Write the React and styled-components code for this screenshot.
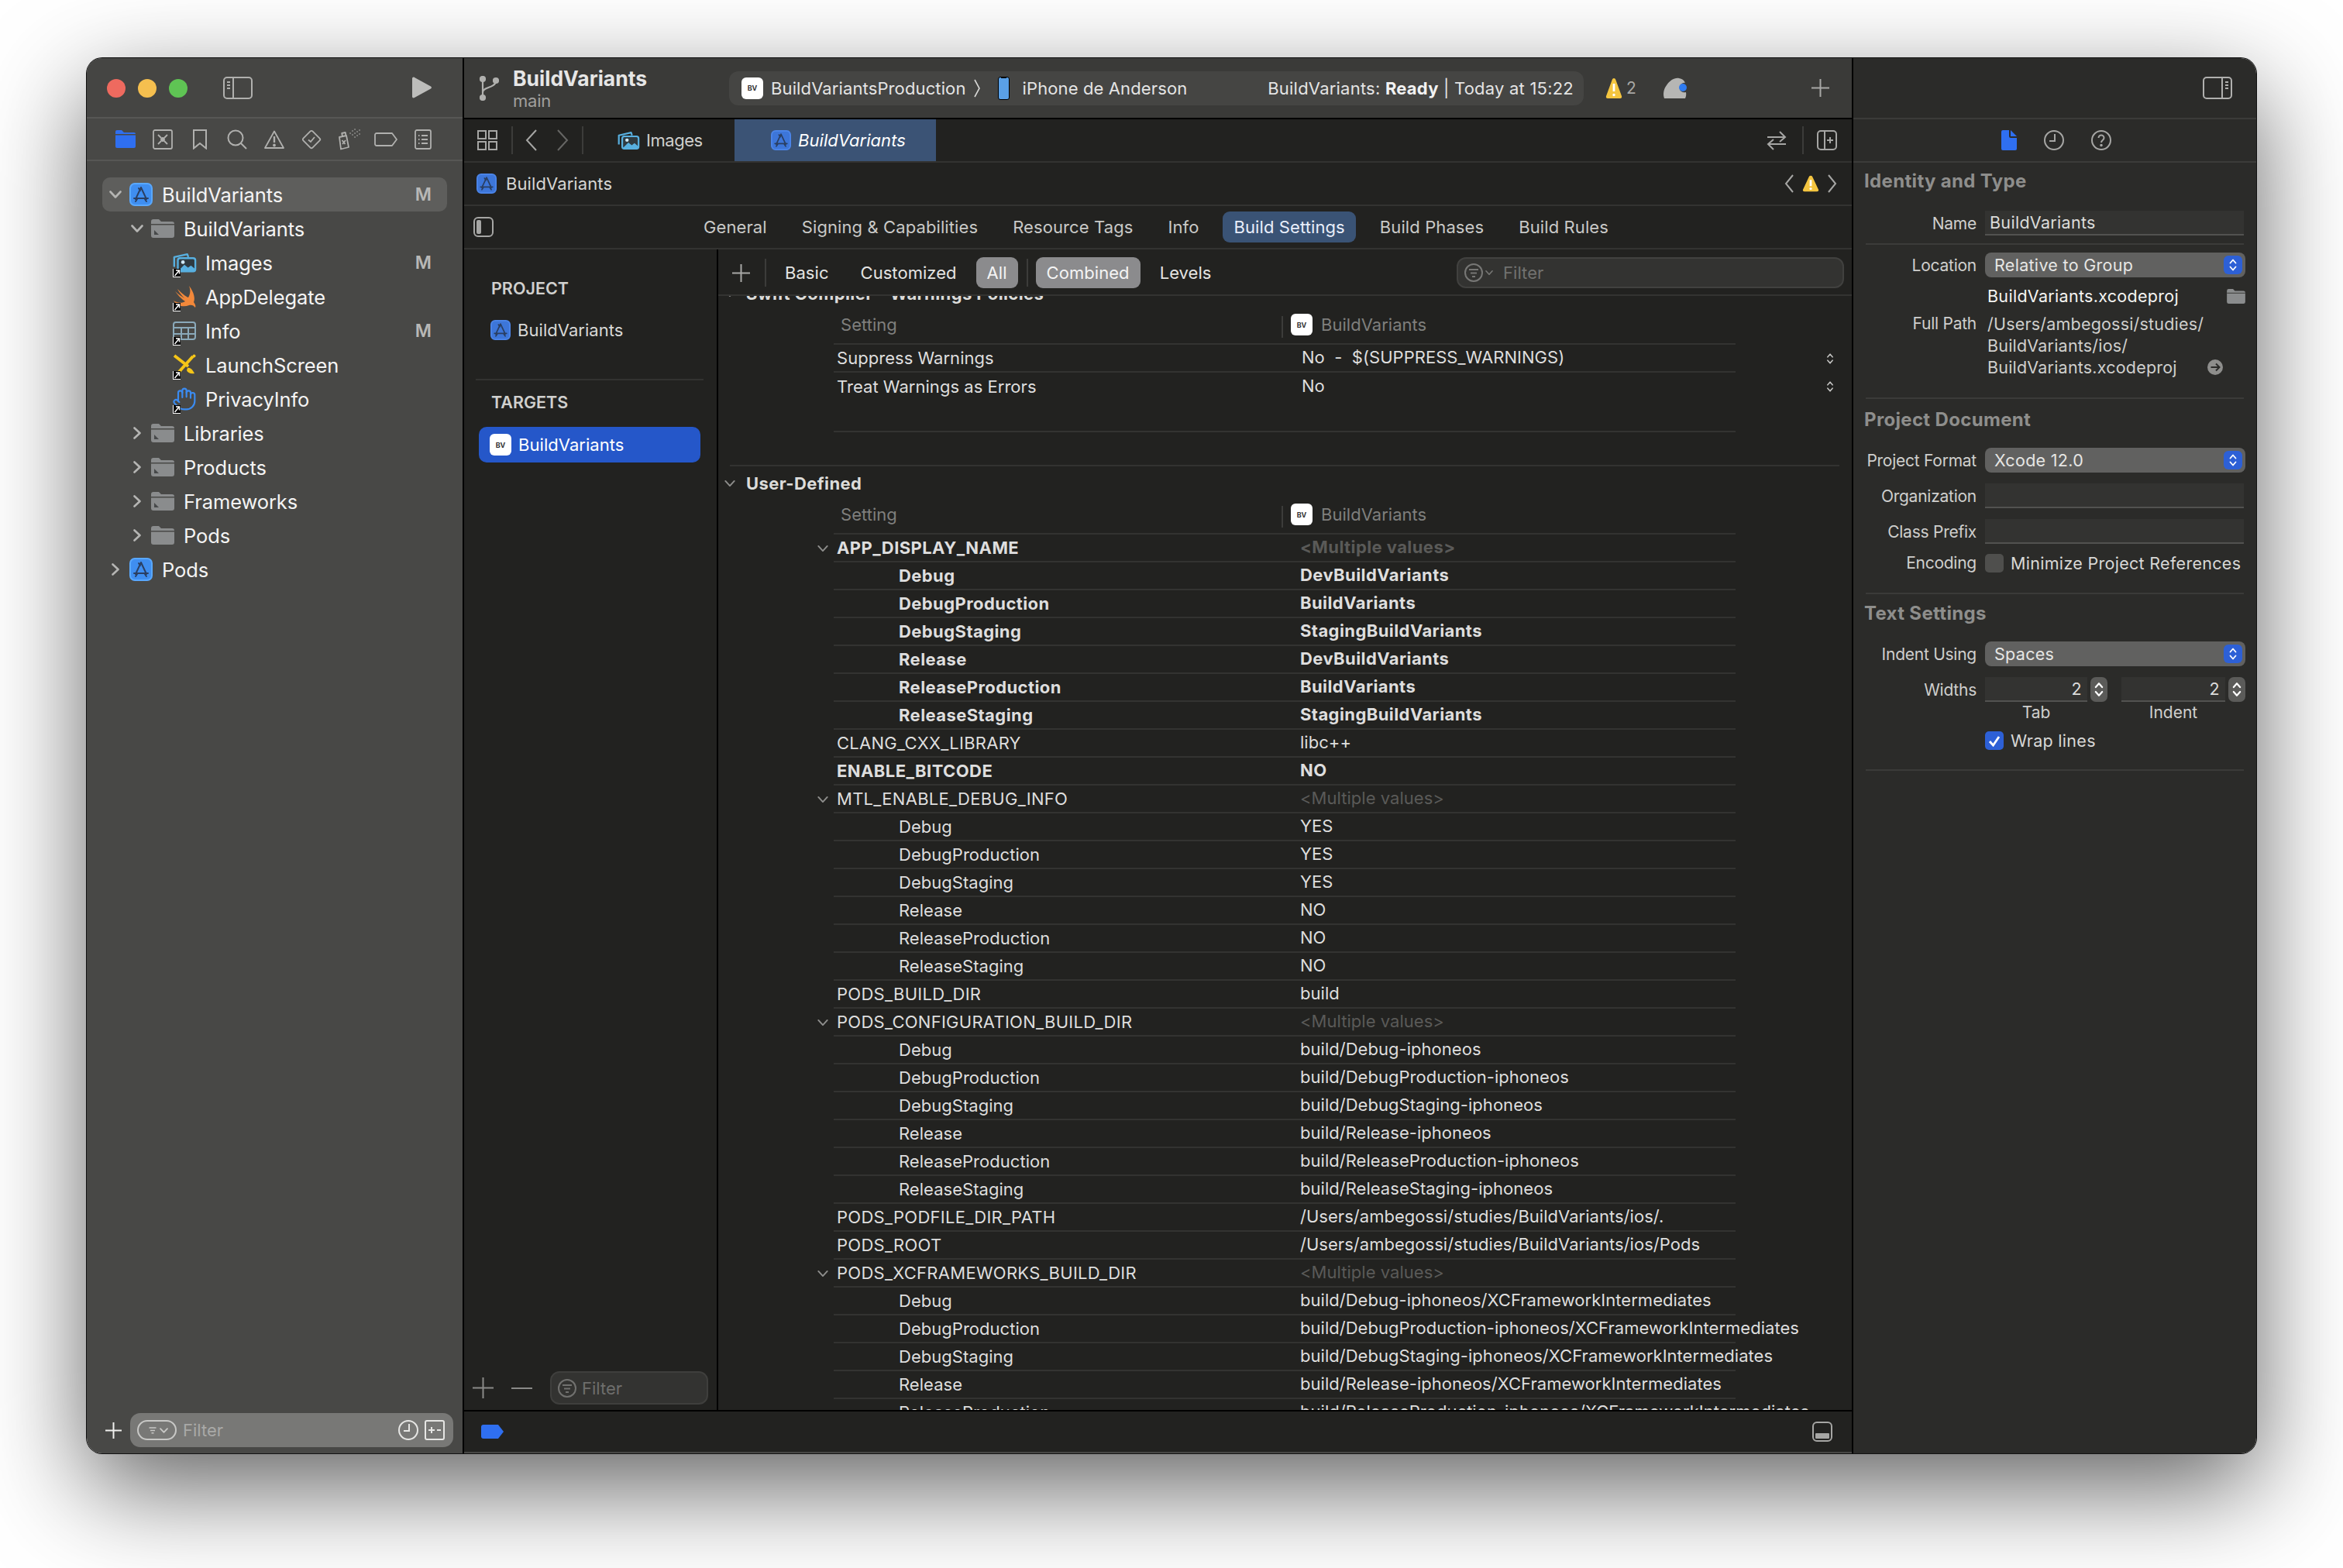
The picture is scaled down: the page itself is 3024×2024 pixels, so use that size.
import React from "react"
import styled, { createGlobalStyle } from "styled-components"
import { Hand } from "lucide-react"

const GlobalStyle = createGlobalStyle`
  html, body { margin: 0; padding: 0; background: #fff; }
  * { box-sizing: border-box; }
  body { font-family: Inter, "Noto Sans", "Liberation Sans", sans-serif; -webkit-font-smoothing: antialiased; }
`

const Page = styled.div`
  width: 3024px;
  height: 2024px;
  padding: 75px 112px 148px;
  overflow: hidden;
`
const Window = styled.div`
  width: 2800px;
  height: 1801px;
  display: flex;
  border-radius: 20px;
  overflow: hidden;
  box-shadow: 0 0 0 1px #111, 0 44px 130px rgba(0, 0, 0, 0.62);
`
const Gap = styled.span`
  width: ${p => p.$w}px;
  flex-shrink: 0;
`
const PushRight = styled.span`
  margin-left: auto;
  display: flex;
`

/* left navigator */
const Navigator = styled.div`
  width: 485px;
  display: flex;
  flex-direction: column;
  background: #484846;
  flex-shrink: 0;
`
const NavTitle = styled.div`
  height: 78px;
  display: flex;
  align-items: center;
  padding: 0 40px 0 26px;
  background: #454543;
  border-bottom: 2px solid #575755;
  flex-shrink: 0;
`
const Light = styled.span`
  width: 24px;
  height: 24px;
  border-radius: 50%;
  margin-right: 16px;
  margin-top: 2px;
  background: ${p => p.$c};
`
const NavTabs = styled.div`
  height: 55px;
  display: flex;
  align-items: center;
  padding-left: 33px;
  gap: 14px;
  border-bottom: 2px solid #575755;
  flex-shrink: 0;
`
const NavTab = styled.div`
  width: 34px;
  height: 34px;
  display: flex;
  align-items: center;
  justify-content: center;
`
const Tree = styled.div`
  flex: 1;
  padding: 21px 20px 0;
`
const TreeRow = styled.div`
  height: 44px;
  display: flex;
  align-items: center;
  border-radius: 10px;
  padding-left: ${p => 4 + p.$level * 28}px;
  padding-right: 20px;
  background: ${p => (p.$selected ? "#5e5e5c" : "transparent")};
`
const ChevronSlot = styled.span`
  width: 26px;
  margin-right: 4px;
  display: flex;
  justify-content: center;
  flex-shrink: 0;
`
const IconSlot = styled.span`
  position: relative;
  width: 32px;
  height: 32px;
  margin-right: 11px;
  display: flex;
  align-items: center;
  justify-content: center;
  flex-shrink: 0;
`
const AliasBadge = styled.span`
  position: absolute;
  left: 1px;
  bottom: -3px;
  width: 10px;
  height: 11px;
  background: #000;
  border-left: 1px solid #fff;
  border-bottom: 1px solid #fff;
  display: flex;
`
const TreeLabel = styled.span`
  font-size: 25.5px;
  letter-spacing: -0.1px;
  color: #f4f4f4;
`
const Modified = styled.span`
  margin-left: auto;
  font-size: 23px;
  font-weight: 600;
  color: #b8b8b6;
`
const NavBottom = styled.div`
  height: 54px;
  display: flex;
  align-items: center;
  padding: 0 12px 6px 24px;
  gap: 11px;
`
const NavFilter = styled.div`
  flex: 1;
  height: 44px;
  border-radius: 13px;
  background: #787876;
  display: flex;
  align-items: center;
  padding: 0 11px 0 9px;
  color: #a9a9a7;
  font-size: 22px;
  letter-spacing: 0;
`
const FilterPill = styled.span`
  width: 51px;
  height: 26px;
  border: 2px solid #c8c8c6;
  border-radius: 13px;
  margin-right: 8px;
  display: flex;
  align-items: center;
  justify-content: center;
`
const NavFilterEnd = styled.span`
  margin-left: auto;
  display: flex;
  align-items: center;
  gap: 8px;
`

/* centre editor */
const Editor = styled.div`
  flex: 1;
  min-width: 0;
  display: flex;
  flex-direction: column;
  background: #222220;
  border-left: 2px solid #000;
  border-right: 2px solid #000;
`
const Toolbar = styled.div`
  height: 79px;
  display: flex;
  align-items: center;
  padding-left: 19px;
  background: #3a3a38;
  border-bottom: 2px solid #000;
  flex-shrink: 0;
`
const ProjectTitle = styled.div`
  width: 279px;
  margin-left: 17px;
  display: flex;
  flex-direction: column;
  gap: 3px;
  padding-top: 1px;
`
const ProjectName = styled.span`
  font-size: 26.5px;
  font-weight: 700;
  letter-spacing: 0;
  color: #e6e6e6;
  line-height: 28px;
`
const BranchName = styled.span`
  font-size: 22px;
  letter-spacing: -0.2px;
  color: #a0a09e;
  line-height: 24px;
`
const SchemePill = styled.div`
  width: 1103px;
  height: 44px;
  border-radius: 12px;
  background: #454543;
  display: flex;
  align-items: center;
  padding: 0 13px 0 16px;
  color: #e4e4e4;
  font-size: 22px;
  letter-spacing: 0.12px;
  white-space: nowrap;
`
const Bv = styled.span`
  width: 28px;
  height: 28px;
  border-radius: 6px;
  background: #fff;
  color: #333;
  font-size: 9px;
  font-weight: 700;
  letter-spacing: 0;
  display: flex;
  align-items: center;
  justify-content: center;
  flex-shrink: 0;
`
const SchemeName = styled.span`
  margin-left: ${p => p.$ml}px;
`
const SchemeChevron = styled.svg`
  margin: 0 23px 0 10px;
`
const Status = styled.span`
  margin-left: auto;
  letter-spacing: 0.22px;
  b { font-weight: 700; color: #f2f2f2; }
`
const WarningCount = styled.span`
  margin-left: 5px;
  font-size: 21px;
  color: #a8a8a6;
`
const CloudIcon = styled.svg`
  margin-left: 34px;
`
const ToolbarEnd = styled.span`
  margin-left: auto;
  margin-right: 29px;
  display: flex;
`
const TabBar = styled.div`
  height: 56px;
  display: flex;
  align-items: stretch;
  padding-left: 17px;
  border-bottom: 2px solid #333331;
  flex-shrink: 0;
`
const TabTools = styled.div`
  display: flex;
  align-items: center;
`
const Sep = styled.span`
  width: 2px;
  height: ${p => p.$h || 36}px;
  background: #3c3c3a;
  margin: 0 ${p => p.$r || 0}px 0 ${p => p.$l || 0}px;
  flex-shrink: 0;
`
const FileTab = styled.div`
  height: 54px;
  display: flex;
  align-items: center;
  gap: ${p => (p.$active ? 9 : 8)}px;
  padding-left: ${p => p.$pl}px;
  width: ${p => p.$w}px;
  font-size: 22px;
  letter-spacing: ${p => (p.$active ? "0.05px" : "-0.45px")};
  color: ${p => (p.$active ? "#fff" : "#cfcfcd")};
  font-style: ${p => (p.$active ? "italic" : "normal")};
  background: ${p => (p.$active ? "#3b5375" : "transparent")};
`
const TabEnd = styled.div`
  margin-left: auto;
  padding-right: 19px;
  display: flex;
  align-items: center;
`
const JumpBar = styled.div`
  height: 56px;
  display: flex;
  align-items: center;
  padding: 0 19px 0 16px;
  gap: 12px;
  border-bottom: 2px solid #333331;
  font-size: 22px;
  letter-spacing: 0.1px;
  color: #d6d6d4;
  flex-shrink: 0;
`
const JumpEnd = styled.div`
  margin-left: auto;
  display: flex;
  align-items: center;
  gap: 11px;
`
const SectionTabs = styled.div`
  height: 56px;
  display: flex;
  align-items: center;
  padding-left: 12px;
  border-bottom: 2px solid #333331;
  flex-shrink: 0;
`
const TabList = styled.div`
  margin-left: 257px;
  display: flex;
  gap: 17px;
`
const SectionTab = styled.div`
  height: 40px;
  padding: 0 14px;
  border-radius: 9px;
  display: flex;
  align-items: center;
  font-size: 22px;
  letter-spacing: 0.1px;
  color: ${p => (p.$active ? "#e8eefa" : "#c9c9c7")};
  background: ${p => (p.$active ? "#3a5375" : "transparent")};
`
const Body = styled.div`
  flex: 1;
  min-height: 0;
  display: flex;
`
const TargetList = styled.div`
  width: 328px;
  flex-shrink: 0;
  border-right: 2px solid #000;
  display: flex;
  flex-direction: column;
  padding-top: 35px;
`
const ListHeading = styled.div`
  height: 30px;
  padding-left: 35px;
  display: flex;
  align-items: center;
  font-size: 21.5px;
  font-weight: 600;
  letter-spacing: 0;
  color: #d0d0ce;
`
const ListRow = styled.div`
  height: 46px;
  margin: ${p => p.$mt}px 21px 0 19px;
  padding-left: ${p => (p.$selected ? 14 : 15)}px;
  border-radius: 10px;
  display: flex;
  align-items: center;
  gap: 9px;
  font-size: 22px;
  letter-spacing: 0.05px;
  color: ${p => (p.$selected ? "#fff" : "#d8d8d6")};
  background: ${p => (p.$selected ? "#2557c9" : "transparent")};
`
const ListRule = styled.div`
  height: 2px;
  margin: 40px 17px 13px 15px;
  background: #333331;
`
const ListBottom = styled.div`
  margin-top: auto;
  padding: 0 11px 7px 11px;
  display: flex;
  align-items: center;
  gap: 23px;
`
const SmallFilter = styled.div`
  flex: 1;
  height: 43px;
  border-radius: 12px;
  background: #333331;
  border: 2px solid #3f3f3d;
  display: flex;
  align-items: center;
  gap: 7px;
  padding-left: 8px;
  color: #6e6e6c;
  font-size: 22px;
`
const SettingsPane = styled.div`
  flex: 1;
  min-width: 0;
  display: flex;
  flex-direction: column;
`
const FilterBar = styled.div`
  height: 60px;
  display: flex;
  align-items: center;
  padding: 2px 10px 0 18px;
  border-bottom: 2px solid #333331;
  font-size: 22px;
  letter-spacing: 0.05px;
  color: #e4e4e2;
  flex-shrink: 0;
`
const ScopeText = styled.span`
  margin-left: ${p => p.$ml}px;
`
const ScopePill = styled.span`
  height: 40px;
  margin-left: ${p => p.$ml}px;
  padding: 0 14px;
  border-radius: 9px;
  background: #8b8b8d;
  color: #f4f4f4;
  display: flex;
  align-items: center;
`
const FilterField = styled.div`
  margin-left: auto;
  width: 500px;
  height: 40px;
  border-radius: 12px;
  background: #333331;
  border: 2px solid #41413f;
  display: flex;
  align-items: center;
  gap: 3px;
  padding-left: 8px;
  color: #71716f;
`
const FilterWord = styled.span`
  margin-left: 10px;
`
const Scroller = styled.div`
  flex: 1;
  min-height: 0;
  overflow: hidden;
`
const SettingsSection = styled.div`
  margin-top: ${p => p.$mt || 0}px;
`
const SectionGap = styled.div`
  height: 42px;
`
const GroupHeader = styled.div`
  height: 44px;
  display: flex;
  align-items: center;
  padding-left: 8px;
  gap: 14px;
  font-size: 22px;
  font-weight: 700;
  letter-spacing: 0.4px;
  color: #dcdcda;
`
const GroupRule = styled.div`
  height: 2px;
  margin: 0 16px 0 15px;
  background: #333331;
`
const SetRow = styled.div`
  height: ${p => p.$h || 36}px;
  display: flex;
  align-items: stretch;
  padding-left: 127px;
  font-size: 22px;
  letter-spacing: 0.03px;
`
const RowChevron = styled.span`
  width: 22px;
  padding-right: 6px;
  display: flex;
  align-items: center;
  justify-content: center;
  flex-shrink: 0;
`
const Cells = styled.div`
  width: 1164px;
  display: flex;
  align-items: center;
  border-bottom: ${p => (p.$noRule ? "none" : "2px solid #333331")};
  flex-shrink: 0;
`
const NameCell = styled.span`
  width: 602px;
  padding-left: ${p => (p.$sub ? 84 : 4)}px;
  color: #dedede;
  font-weight: ${p => (p.$bold ? 700 : 400)};
  letter-spacing: ${p => (p.$bold ? 0.42 : p.$caps ? 0.27 : 0.03)}px;
  white-space: nowrap;
  flex-shrink: 0;
`
const ValueCell = styled.span`
  color: ${p => (p.$muted ? "#5a5a58" : "#dedede")};
  font-weight: ${p => (p.$bold ? 700 : 400)};
  letter-spacing: ${p => (p.$bold ? 0.42 : 0.03)}px;
  padding-bottom: 3px;
  padding-left: ${p => p.$pl || 0}px;
  white-space: nowrap;
`
const ColumnName = styled.span`
  width: 578px;
  padding: 0 0 6px 9px;
  color: #7f7f7d;
  flex-shrink: 0;
`
const ColumnTarget = styled.span`
  display: flex;
  align-items: center;
  gap: 11px;
  color: #7f7f7d;
  padding-bottom: 6px;
`
const Stepper = styled.span`
  margin-left: 117px;
  display: flex;
  align-items: center;
`
const StatusBar = styled.div`
  height: 56px;
  display: flex;
  align-items: center;
  padding: 0 25px 0 22px;
  border-top: 2px solid #000;
  border-bottom: 2px solid #474745;
  flex-shrink: 0;
`

/* right inspector */
const Inspector = styled.div`
  width: 520px;
  flex-shrink: 0;
  display: flex;
  flex-direction: column;
  background: #2b2b29;
  color: #cfcfcd;
  font-size: 21.5px;
  letter-spacing: 0.3px;
`
const InspectorTop = styled.div`
  height: 79px;
  display: flex;
  align-items: center;
  justify-content: flex-end;
  padding-right: 31px;
  border-bottom: 2px solid #3b3b39;
  flex-shrink: 0;
`
const InspectorTabs = styled.div`
  height: 56px;
  display: flex;
  align-items: center;
  padding-left: 191px;
  gap: 35px;
  border-bottom: 2px solid #3b3b39;
  flex-shrink: 0;
`
const InspectorTitle = styled.div`
  height: ${p => p.$h}px;
  padding-left: 14px;
  display: flex;
  align-items: center;
  font-size: 24px;
  font-weight: 700;
  letter-spacing: 0.33px;
  color: #8e8e8c;
`
const FormRow = styled.div`
  min-height: 24px;
  height: ${p => (p.$h ? `${p.$h}px` : "auto")};
  margin-top: ${p => p.$mt || 0}px;
  display: flex;
  align-items: ${p => (p.$top ? "flex-start" : "center")};
  padding-right: 14px;
`
const FormLabel = styled.span`
  width: 159px;
  margin-right: 11px;
  font-size: 21px;
  letter-spacing: -0.25px;
  line-height: ${p => (p.$tall ? "28px" : "normal")};
  text-align: right;
  white-space: nowrap;
  flex-shrink: 0;
`
const TextField = styled.div`
  flex: 1;
  height: 32px;
  margin-right: 2px;
  padding-left: 6px;
  background: #333331;
  border-bottom: 2px solid #525250;
  display: flex;
  align-items: center;
  color: #dcdcda;
`
const Popup = styled.div`
  flex: 1;
  height: 32px;
  border-radius: 8px;
  background: #616160;
  color: #e6e6e4;
  padding: 0 4px 0 12px;
  display: flex;
  align-items: center;
  justify-content: space-between;
`
const PopupArrows = styled.span`
  width: 24px;
  height: 24px;
  border-radius: 6px;
  background: #2d60d6;
  display: flex;
  align-items: center;
  justify-content: center;
`
const Value = styled.span`
  color: ${p => (p.$bright ? "#f4f4f2" : "#cfcfcd")};
  padding-left: 3px;
  line-height: 28px;
  white-space: nowrap;
`
const CheckText = styled.span`
  color: #d8d8d6;
  line-height: 24px;
  white-space: nowrap;
`
const PathBlock = styled.div`
  flex: 1;
  display: flex;
  flex-direction: column;
  letter-spacing: 0.2px;
`
const PathLine = styled.div`
  display: flex;
  align-items: center;
  justify-content: space-between;
  padding-right: 29px;
  height: 28px;
`
const FolderEnd = styled.div`
  flex: 1;
  display: flex;
  align-items: center;
  justify-content: space-between;
`
const InspectorRule = styled.div`
  height: 2px;
  margin: ${p => p.$mt}px 16px 0;
  background: #3b3b39;
`
const Check = styled.span`
  width: 24px;
  height: 24px;
  margin-right: 9px;
  border-radius: 5px;
  background: ${p => (p.$on ? "#2d60d6" : "#4f4f4d")};
  display: flex;
  align-items: center;
  justify-content: center;
  flex-shrink: 0;
`
const NumberField = styled.div`
  width: ${p => p.$w}px;
  height: 32px;
  padding-right: 7px;
  background: #333331;
  border-bottom: 2px solid #525250;
  display: flex;
  align-items: center;
  justify-content: flex-end;
  color: #dcdcda;
`
const StepBox = styled.span`
  width: 22px;
  height: 32px;
  margin-left: 4px;
  margin-right: ${p => p.$mr || 0}px;
  border-radius: 7px;
  background: #5b5b59;
  display: flex;
  align-items: center;
  justify-content: center;
`
const Caption = styled.span`
  width: ${p => p.$w}px;
  margin-right: ${p => p.$mr}px;
  text-align: center;
  font-size: 21px;
  letter-spacing: 0;
`

/* drawings */
const AppIcon = ({ size = 30, fill = "#3f8ef0", edge = "#59a8ff" }) => (
  <svg width={size} height={size} viewBox="0 0 30 30">
    <rect x="1" y="1" width="28" height="28" rx="6" fill={fill} stroke={edge} strokeWidth="2" />
    <path d="M15 6 L22 21 M15 6 L8 21 M12 7l2 3 M6 20H24 M10 21l-2 3 M20 21l2 3" fill="none" stroke="#2a3f63" strokeWidth="2" strokeLinecap="round" />
  </svg>
)
const Folder = ({ mark = true, width = 30, height = 24 }) => (
  <svg width={width} height={height} viewBox="0 0 30 24">
    <path d="M0 3a3 3 0 0 1 3-3h7l3 3h14a3 3 0 0 1 3 3v15a3 3 0 0 1-3 3H3a3 3 0 0 1-3-3z" fill="#8a8c8d" />
    <rect x="0" y="6" width="30" height="1.5" fill="#484846" />
    {mark && <path d="M4 14l6 6H4z" fill="#47494a" />}
  </svg>
)
const ImagesIcon = ({ size = 34 }) => (
  <svg width={size} height={size * 0.82} viewBox="0 0 34 28">
    <path d="M3 20V6.5L21 2.5l1.4 4" fill="none" stroke="#58b0e0" strokeWidth="2.5" strokeLinejoin="round" />
    <rect x="8" y="8" width="24" height="18" rx="3" fill="#2f3a40" stroke="#58b0e0" strokeWidth="2.5" />
    <path d="M9 25l8-8 5 4 4-3 6 5v1a2 2 0 0 1-2 2H11z" fill="#58b0e0" />
    <circle cx="15" cy="13.5" r="2.5" fill="#cfe9f7" />
  </svg>
)
const SwiftIcon = () => (
  <svg width="30" height="30" viewBox="0 0 30 30">
    <path d="M21 1C28 10 29 18 27 22C29 25 30 27 29 29C27 26 24 25 21 26C14 29 6 27 1 20C6 23 12 24 16 21C11 18 6 12 3 8C7 12 12 15 15 17C12 14 8 9 6 5C11 10 17 15 20 16C23 11 23 6 21 1Z" fill="#f2883a" />
  </svg>
)
const PlistIcon = () => (
  <svg width="30" height="24" viewBox="0 0 30 24">
    <rect x="1" y="1" width="28" height="22" rx="3" fill="none" stroke="#8aa9ba" strokeWidth="2" />
    <path d="M1 8H29M1 16H29M11 8V23M20 8V23" stroke="#8aa9ba" strokeWidth="2" />
  </svg>
)
const StoryboardIcon = () => (
  <svg width="30" height="28" viewBox="0 0 30 28">
    <path d="M2 2L20 16" stroke="#f5c518" strokeWidth="4" />
    <path d="M26 3L8 23" stroke="#f5c518" strokeWidth="4" />
    <path d="M19 18c3-1 6 1 9 7-5 1-9-1-10-4z" fill="#f5c518" />
    <circle cx="27.5" cy="2.5" r="2" fill="#f5c518" />
  </svg>
)
const Alias = () => (
  <AliasBadge>
    <svg width="9" height="10" viewBox="0 0 9 10">
      <path d="M1.5 9L7 2.5M3 2H7.5V6.5" fill="none" stroke="#fff" strokeWidth="1.5" />
    </svg>
  </AliasBadge>
)
const Chevron = ({ dir = "down", size = 16, color = "#b5b5b3", width = 2.6 }) => (
  <svg width={size} height={size} viewBox="0 0 16 16">
    <path
      d={dir === "down" ? "M1.5 4.5L8 11.5L14.5 4.5" : "M4.5 1.5L11.5 8L4.5 14.5"}
      fill="none"
      stroke={color}
      strokeWidth={width}
      strokeLinecap="round"
      strokeLinejoin="round"
    />
  </svg>
)
const NavChevron = ({ dir }) => (
  <svg width="16" height="28" viewBox="0 0 16 28">
    <path d={dir === "left" ? "M14 1L2 14L14 27" : "M2 1L14 14L2 27"} fill="none" stroke={dir === "left" ? "#a6a6a4" : "#666664"} strokeWidth="2" />
  </svg>
)
const SmallNav = ({ dir }) => (
  <svg width="12" height="24" viewBox="0 0 12 24">
    <path d={dir === "left" ? "M11 1L2 12L11 23" : "M1 1L10 12L1 23"} fill="none" stroke="#a6a6a4" strokeWidth="2" />
  </svg>
)
const PanelIcon = ({ side = "left" }) => (
  <svg width="38" height="29" viewBox="0 0 38 29">
    <rect x="1" y="1" width="36" height="27" rx="4" fill="none" stroke="#b0b0ae" strokeWidth="2" />
    {side === "left" ? (
      <path d="M13 1V28M5 7H9M5 11H9M5 15H9" stroke="#b0b0ae" strokeWidth="2" />
    ) : (
      <path d="M25 1V28M29 7H33M29 11H33M29 15H33" stroke="#b0b0ae" strokeWidth="2" />
    )}
  </svg>
)
const Warn = ({ w = 22, h = 28 }) => (
  <svg width={w} height={h} viewBox="0 0 22 28" preserveAspectRatio="none">
    <path d="M11 1C12.5 1 13 2 13.5 3.5L21 24c.6 2-.4 3-2 3H3c-1.6 0-2.6-1-2-3L8.5 3.5C9 2 9.5 1 11 1Z" fill="#f4c540" />
    <path d="M11 8V18" stroke="#fff" strokeWidth="2.8" />
    <circle cx="11" cy="22.5" r="1.7" fill="#fff" />
  </svg>
)
const Plus = ({ size = 23, color = "#a8a8a6", width = 2 }) => (
  <svg width={size} height={size} viewBox="0 0 24 24">
    <path d="M12 0V24M0 12H24" stroke={color} strokeWidth={width * 24 / size} />
  </svg>
)
const FilterLines = ({ size = 24, color = "#777775", ring = true }) => (
  <svg width={size} height={size} viewBox="0 0 24 24">
    {ring && <circle cx="12" cy="12" r="11" fill="none" stroke={color} strokeWidth="2" />}
    <path d="M6 8H18M8 12.5H16M10 17H14" stroke={color} strokeWidth="2" />
  </svg>
)
const UpDown = ({ color = "#fff", height = 18, width = 10 }) => (
  <svg width={width} height={height} viewBox="0 0 10 18">
    <path d="M1.5 6.5L5 2.5L8.5 6.5M1.5 11.5L5 15.5L8.5 11.5" fill="none" stroke={color} strokeWidth="1.8" strokeLinecap="round" strokeLinejoin="round" />
  </svg>
)
const Clock = ({ size = 26, color = "#a6a6a4" }) => (
  <svg width={size} height={size} viewBox="0 0 26 26">
    <circle cx="13" cy="13" r="12" fill="none" stroke={color} strokeWidth="2" />
    <path d="M14 5V14H7" fill="none" stroke={color} strokeWidth="2" />
  </svg>
)
const NavIcons = () => (
  <>
    <NavTab>
      <svg width="26" height="23" viewBox="0 0 26 23">
        <path d="M0 2a2 2 0 0 1 2-2h6l3 3h13a2 2 0 0 1 2 2v16a2 2 0 0 1-2 2H2a2 2 0 0 1-2-2z" fill="#2f6ff0" />
        <rect y="5" width="26" height="1.5" fill="#484846" />
      </svg>
    </NavTab>
    <NavTab>
      <svg width="26" height="26" viewBox="0 0 26 26" fill="none" stroke="#b0b0ae" strokeWidth="1.8">
        <rect x="1" y="1" width="24" height="24" rx="2" />
        <path d="M7 7l4 4M19 7l-4 4M7 19l4-4M19 19l-4-4" />
        <circle cx="13" cy="13" r="2" fill="#b0b0ae" />
      </svg>
    </NavTab>
    <NavTab>
      <svg width="18" height="26" viewBox="0 0 18 26" fill="none" stroke="#b0b0ae" strokeWidth="2">
        <path d="M1 1H17V24.5L9 18L1 24.5Z" />
      </svg>
    </NavTab>
    <NavTab>
      <svg width="26" height="26" viewBox="0 0 26 26" fill="none" stroke="#b0b0ae" strokeWidth="2">
        <circle cx="11" cy="11" r="9.5" />
        <path d="M18 18L25 25" />
      </svg>
    </NavTab>
    <NavTab>
      <svg width="26" height="24" viewBox="0 0 26 24" fill="none" stroke="#b0b0ae" strokeWidth="1.8">
        <path d="M13 1.5L25 23H1Z" strokeLinejoin="round" />
        <path d="M13 8V16" strokeWidth="2.4" />
        <circle cx="13" cy="19.5" r="1" fill="#b0b0ae" />
      </svg>
    </NavTab>
    <NavTab>
      <svg width="26" height="26" viewBox="0 0 26 26" fill="none" stroke="#b0b0ae" strokeWidth="1.8">
        <rect x="4.5" y="4.5" width="17" height="17" rx="2" transform="rotate(45 13 13)" />
        <path d="M9 13.5L12 16L17 10" />
      </svg>
    </NavTab>
    <NavTab>
      <svg width="30" height="28" viewBox="0 0 30 28" fill="none" stroke="#b0b0ae" strokeWidth="1.8">
        <path d="M3 11l9-2 3 15-10 2.5Z M7 10l-.8-4 4.500-1 .8 4" strokeLinejoin="round" />
        <path d="M6.5 15l4 5M11 15l-4 5" />
        <path d="M17 6h.1M20 3h.1M23 1h.1M20 8h.1M23 6h.1M26 4h.1M23 11h.1M26 9h.1M29 7h.1M29 2h.1" strokeWidth="1.6" strokeLinecap="round" />
      </svg>
    </NavTab>
    <NavTab>
      <svg width="30" height="18" viewBox="0 0 30 18" fill="none" stroke="#b0b0ae" strokeWidth="1.8">
        <path d="M3 1H23L29 9L23 17H3a2 2 0 0 1-2-2V3a2 2 0 0 1 2-2Z" strokeLinejoin="round" />
      </svg>
    </NavTab>
    <NavTab>
      <svg width="22" height="26" viewBox="0 0 22 26" fill="none" stroke="#b0b0ae" strokeWidth="1.8">
        <rect x="1" y="1" width="20" height="24" rx="2" />
        <path d="M5 8h1.5M9 8h8M5 13h1.5M9 13h8M5 18h1.5M9 18h8" />
      </svg>
    </NavTab>
  </>
)

const tree = [
  { name: "BuildVariants", level: 0, open: true, icon: "app", selected: true, m: true },
  { name: "BuildVariants", level: 1, open: true, icon: "folder" },
  { name: "Images", level: 2, icon: "images", alias: true, m: true },
  { name: "AppDelegate", level: 2, icon: "swift", alias: true },
  { name: "Info", level: 2, icon: "plist", alias: true, m: true },
  { name: "LaunchScreen", level: 2, icon: "story", alias: true },
  { name: "PrivacyInfo", level: 2, icon: "hand", alias: true },
  { name: "Libraries", level: 1, closed: true, icon: "folder" },
  { name: "Products", level: 1, closed: true, icon: "folder" },
  { name: "Frameworks", level: 1, closed: true, icon: "folder" },
  { name: "Pods", level: 1, closed: true, icon: "plain" },
  { name: "Pods", level: 0, closed: true, icon: "app" },
]

const treeIcon = kind => {
  if (kind === "app") return <AppIcon />
  if (kind === "folder") return <Folder />
  if (kind === "plain") return <Folder mark={false} />
  if (kind === "images") return <ImagesIcon />
  if (kind === "swift") return <SwiftIcon />
  if (kind === "plist") return <PlistIcon />
  if (kind === "story") return <StoryboardIcon />
  return <Hand size={32} color="#3b8bf0" strokeWidth={1.6} />
}

const variants = ["Debug", "DebugProduction", "DebugStaging", "Release", "ReleaseProduction", "ReleaseStaging"]

const group = (name, values, bold) => [
  { name, value: "<Multiple values>", muted: true, open: true, bold },
  ...variants.map((v, i) => ({ name: v, value: values[i], sub: true, bold })),
]

const buildDirs = s => variants.map(v => `build/${v}-iphoneos${s}`)

const rows = [
  ...group("APP_DISPLAY_NAME", ["DevBuildVariants", "BuildVariants", "StagingBuildVariants", "DevBuildVariants", "BuildVariants", "StagingBuildVariants"], true),
  { name: "CLANG_CXX_LIBRARY", value: "libc++" },
  { name: "ENABLE_BITCODE", value: "NO", bold: true },
  ...group("MTL_ENABLE_DEBUG_INFO", ["YES", "YES", "YES", "NO", "NO", "NO"]),
  { name: "PODS_BUILD_DIR", value: "build" },
  ...group("PODS_CONFIGURATION_BUILD_DIR", buildDirs("")),
  { name: "PODS_PODFILE_DIR_PATH", value: "/Users/ambegossi/studies/BuildVariants/ios/." },
  { name: "PODS_ROOT", value: "/Users/ambegossi/studies/BuildVariants/ios/Pods" },
  ...group("PODS_XCFRAMEWORKS_BUILD_DIR", buildDirs("/XCFrameworkIntermediates")).slice(0, 6),
]

const SettingRow = ({ row }) => (
  <SetRow>
    <RowChevron>{row.open && <Chevron size={14} color="#8e8e8c" width={2.2} />}</RowChevron>
    <Cells>
      <NameCell $sub={row.sub} $bold={row.bold} $caps={row.name === row.name.toUpperCase()}>{row.name}</NameCell>
      <ValueCell $muted={row.muted} $bold={row.bold}>{row.value}</ValueCell>
    </Cells>
  </SetRow>
)

const ColumnHeader = () => (
  <SetRow $h={44}>
    <RowChevron />
    <Cells>
      <ColumnName>Setting</ColumnName>
      <Sep $h={28} $r={10} />
      <ColumnTarget><Bv>BV</Bv>BuildVariants</ColumnTarget>
    </Cells>
  </SetRow>
)

const PopupButton = ({ children }) => (
  <Popup>
    {children}
    <PopupArrows><UpDown /></PopupArrows>
  </Popup>
)

export default function App() {
  return (
    <Page>
      <GlobalStyle />
      <Window>
        <Navigator>
          <NavTitle>
            <Light $c="#ee6a5f" />
            <Light $c="#f5bf4f" />
            <Light $c="#5fc454" />
            <Gap $w={30} />
            <PanelIcon />
            <PushRight>
              <svg width="26" height="28" viewBox="0 0 26 28">
                <path d="M1 2.5C1 .8 2.5 0 4 .9L25 12.5c1.3.8 1.3 2.2 0 3L4 27.1C2.5 28 1 27.2 1 25.5Z" fill="#bdbdbb" />
              </svg>
            </PushRight>
          </NavTitle>
          <NavTabs><NavIcons /></NavTabs>
          <Tree>
            {tree.map((item, i) => (
              <TreeRow key={i} $level={item.level} $selected={item.selected}>
                <ChevronSlot>
                  {item.open && <Chevron />}
                  {item.closed && <Chevron dir="right" />}
                </ChevronSlot>
                <IconSlot>
                  {treeIcon(item.icon)}
                  {item.alias && <Alias />}
                </IconSlot>
                <TreeLabel>{item.name}</TreeLabel>
                {item.m && <Modified>M</Modified>}
              </TreeRow>
            ))}
          </Tree>
          <NavBottom>
            <Plus size={21} color="#f0f0ee" />
            <NavFilter>
              <FilterPill>
                <FilterLines size={18} color="#c8c8c6" ring={false} />
                <Chevron size={11} color="#c8c8c6" width={2.6} />
              </FilterPill>
              Filter
              <NavFilterEnd>
                <Clock color="#e6e6e4" />
                <svg width="26" height="26" viewBox="0 0 26 26" fill="none" stroke="#e6e6e4" strokeWidth="2">
                  <rect x="1" y="1" width="24" height="24" rx="2" />
                  <path d="M5 13h8M9 9v8M16 13h5" />
                </svg>
              </NavFilterEnd>
            </NavFilter>
          </NavBottom>
        </Navigator>

        <Editor>
          <Toolbar>
            <svg width="27" height="32" viewBox="0 0 27 32" fill="none" stroke="#b0b0ae" strokeWidth="2.2">
              <path d="M5 5V27M5 21C5 14 22 16 22 6" />
              <circle cx="5" cy="4" r="3" fill="#b0b0ae" />
              <circle cx="22" cy="6" r="3" fill="#b0b0ae" />
              <circle cx="5" cy="28" r="3" fill="#b0b0ae" />
            </svg>
            <ProjectTitle>
              <ProjectName>BuildVariants</ProjectName>
              <BranchName>main</BranchName>
            </ProjectTitle>
            <SchemePill>
              <Bv>BV</Bv>
              <SchemeName $ml={10}>BuildVariantsProduction</SchemeName>
              <SchemeChevron width="8" height="24" viewBox="0 0 8 24">
                <path d="M1 1L7 12L1 23" fill="none" stroke="#d8d8d6" strokeWidth="1.6" />
              </SchemeChevron>
              <svg width="15" height="30" viewBox="0 0 15 30">
                <rect x=".5" y=".5" width="14" height="29" rx="2.5" fill="#5aa0e6" stroke="#000" />
                <rect x="4" y="0" width="7" height="2" fill="#000" />
              </svg>
              <SchemeName $ml={17}>iPhone de Anderson</SchemeName>
              <Status>BuildVariants: <b>Ready</b> | Today at 15:22</Status>
            </SchemePill>
            <Gap $w={28} />
            <Warn />
            <WarningCount>2</WarningCount>
            <CloudIcon width="32" height="28" viewBox="0 0 32 28">
              <path d="M2 27c-2-5-1-12 3-17C9 4 15 0 21 1c4 .6 7 3 8 6-4-1-8 3-7 8 .6 3 4 5 8 4 .6 3 0 6-1 8z" fill="#b6b6b4" />
              <circle cx="26" cy="13" r="5" fill="#2f7bf0" />
            </CloudIcon>
            <ToolbarEnd><Plus /></ToolbarEnd>
          </Toolbar>

          <TabBar>
            <TabTools>
              <svg width="26" height="26" viewBox="0 0 26 26" fill="none" stroke="#a6a6a4" strokeWidth="2">
                <rect x="1" y="1" width="10" height="10" />
                <rect x="15" y="1" width="10" height="10" />
                <rect x="1" y="15" width="10" height="10" />
                <rect x="15" y="15" width="10" height="10" />
              </svg>
              <Sep $l={18} $r={16} />
              <NavChevron dir="left" />
              <Gap $w={24} />
              <NavChevron dir="right" />
              <Sep $l={17} />
            </TabTools>
            <FileTab $w={195} $pl={43}><ImagesIcon size={30} />Images</FileTab>
            <FileTab $active $w={260} $pl={47}><AppIcon size={26} fill="#3d76d9" edge="#4c86ea" />BuildVariants</FileTab>
            <TabEnd>
              <svg width="26" height="26" viewBox="0 0 26 26" fill="none" stroke="#a6a6a4" strokeWidth="2">
                <path d="M1 9H24M17 2L24 9L17 15M25 18H2M9 12L2 18L9 25" />
              </svg>
              <Sep $l={20} $r={17} />
              <svg width="26" height="26" viewBox="0 0 26 26" fill="none" stroke="#a6a6a4" strokeWidth="2">
                <rect x="1" y="1" width="24" height="24" rx="4" />
                <path d="M10 1V25M17 9V17M13 13H21" />
              </svg>
            </TabEnd>
          </TabBar>

          <JumpBar>
            <AppIcon size={26} fill="#3d76d9" edge="#4c86ea" />
            BuildVariants
            <JumpEnd>
              <SmallNav dir="left" />
              <Warn w={22} h={22} />
              <SmallNav dir="right" />
            </JumpEnd>
          </JumpBar>

          <SectionTabs>
            <svg width="26" height="26" viewBox="0 0 26 26" fill="none">
              <rect x="1" y="1" width="24" height="24" rx="5" stroke="#a6a6a4" strokeWidth="2" />
              <rect x="4" y="4" width="6" height="18" rx="2" fill="#a6a6a4" />
            </svg>
            <TabList>
              <SectionTab>General</SectionTab>
              <SectionTab>Signing & Capabilities</SectionTab>
              <SectionTab>Resource Tags</SectionTab>
              <SectionTab>Info</SectionTab>
              <SectionTab $active>Build Settings</SectionTab>
              <SectionTab>Build Phases</SectionTab>
              <SectionTab>Build Rules</SectionTab>
            </TabList>
          </SectionTabs>

          <Body>
            <TargetList>
              <ListHeading>PROJECT</ListHeading>
              <ListRow $mt={16}><AppIcon size={26} fill="#3d76d9" edge="#4c86ea" />BuildVariants</ListRow>
              <ListRule />
              <ListHeading>TARGETS</ListHeading>
              <ListRow $mt={17} $selected><Bv>BV</Bv>BuildVariants</ListRow>
              <ListBottom>
                <Plus size={27} color="#8a8a88" />
                <svg width="27" height="4" viewBox="0 0 27 4"><rect y="1" width="27" height="2" fill="#8a8a88" /></svg>
                <SmallFilter><FilterLines size={24} color="#71716f" />Filter</SmallFilter>
              </ListBottom>
            </TargetList>

            <SettingsPane>
              <FilterBar>
                <Plus />
                <Sep $h={36} $l={19} />
                <ScopeText $ml={24}>Basic</ScopeText>
                <ScopeText $ml={41}>Customized</ScopeText>
                <ScopePill $ml={25}>All</ScopePill>
                <Sep $h={36} $l={11} />
                <ScopePill $ml={10}>Combined</ScopePill>
                <ScopeText $ml={25}>Levels</ScopeText>
                <FilterField>
                  <FilterLines color="#777775" />
                  <Chevron size={10} color="#777775" />
                  <FilterWord>Filter</FilterWord>
                </FilterField>
              </FilterBar>
              <Scroller>
                <SettingsSection $mt={-25}>
                  <GroupHeader>
                    <Chevron size={14} color="#8e8e8c" width={2.2} />
                    Swift Compiler - Warnings Policies
                  </GroupHeader>
                  <ColumnHeader />
                  <SetRow>
                    <RowChevron />
                    <Cells>
                      <NameCell>Suppress Warnings</NameCell>
                      <ValueCell $pl={2}>No&nbsp; -&nbsp; $(SUPPRESS_WARNINGS)</ValueCell>
                    </Cells>
                    <Stepper><UpDown color="#c4c4c2" height={16} /></Stepper>
                  </SetRow>
                  <SetRow>
                    <RowChevron />
                    <Cells $noRule>
                      <NameCell>Treat Warnings as Errors</NameCell>
                      <ValueCell $pl={2}>No</ValueCell>
                    </Cells>
                    <Stepper><UpDown color="#c4c4c2" height={16} /></Stepper>
                  </SetRow>
                  <SetRow $h={41}>
                    <RowChevron />
                    <Cells />
                  </SetRow>
                </SettingsSection>
                <SettingsSection>
                  <SectionGap />
                  <GroupRule />
                  <GroupHeader>
                    <Chevron size={14} color="#8e8e8c" width={2.2} />
                    User-Defined
                  </GroupHeader>
                  <ColumnHeader />
                  {rows.map((row, i) => <SettingRow key={i} row={row} />)}
                </SettingsSection>
              </Scroller>
            </SettingsPane>
          </Body>

          <StatusBar>
            <svg width="29" height="18" viewBox="0 0 29 18">
              <path d="M3 0H22L29 9L22 18H3a3 3 0 0 1-3-3V3a3 3 0 0 1 3-3Z" fill="#2f6ff0" />
            </svg>
            <PushRight>
              <svg width="26" height="26" viewBox="0 0 26 26" fill="none">
                <rect x="1" y="1" width="24" height="24" rx="5" stroke="#a6a6a4" strokeWidth="2" />
                <rect x="4" y="15" width="18" height="7" rx="1" fill="#a6a6a4" />
              </svg>
            </PushRight>
          </StatusBar>
        </Editor>

        <Inspector>
          <InspectorTop><PanelIcon side="right" /></InspectorTop>
          <InspectorTabs>
            <svg width="20" height="26" viewBox="0 0 20 26">
              <path d="M2 0H10V8a2 2 0 0 0 2 2h8V24a2 2 0 0 1-2 2H2a2 2 0 0 1-2-2V2a2 2 0 0 1 2-2ZM12 0L20 8H12Z" fill="#2f6ff0" />
            </svg>
            <Clock color="#a6a6a4" />
            <svg width="26" height="26" viewBox="0 0 26 26" fill="none" stroke="#a6a6a4" strokeWidth="2">
              <circle cx="13" cy="13" r="12" />
              <path d="M9.5 10c0-2 1.6-3.5 3.5-3.5S16.5 8 16.5 10c0 3-3.5 3-3.5 6" />
              <circle cx="13" cy="19.5" r=".8" fill="#a6a6a4" />
            </svg>
          </InspectorTabs>

          <InspectorTitle $h={46}>Identity and Type</InspectorTitle>
          <FormRow $mt={16}>
            <FormLabel>Name</FormLabel>
            <TextField>BuildVariants</TextField>
          </FormRow>
          <InspectorRule $mt={10} />
          <FormRow $mt={10}>
            <FormLabel>Location</FormLabel>
            <PopupButton>Relative to Group</PopupButton>
          </FormRow>
          <FormRow $mt={10}>
            <FormLabel />
            <FolderEnd>
              <Value $bright>BuildVariants.xcodeproj</Value>
              <Folder mark={false} width={24} height={19} />
            </FolderEnd>
          </FormRow>
          <FormRow $mt={8} $top>
            <FormLabel $tall>Full Path</FormLabel>
            <PathBlock>
              <PathLine><Value>/Users/ambegossi/studies/</Value></PathLine>
              <PathLine><Value>BuildVariants/ios/</Value></PathLine>
              <PathLine>
                <Value>BuildVariants.xcodeproj</Value>
                <svg width="20" height="20" viewBox="0 0 20 20">
                  <circle cx="10" cy="10" r="10" fill="#8e8e8c" />
                  <path d="M4.5 10H15M11 5.5L15.5 10L11 14.5" fill="none" stroke="#2b2b29" strokeWidth="2" />
                </svg>
              </PathLine>
            </PathBlock>
          </FormRow>
          <InspectorRule $mt={25} />

          <InspectorTitle $h={52}>Project Document</InspectorTitle>
          <FormRow $mt={11}>
            <FormLabel>Project Format</FormLabel>
            <PopupButton>Xcode 12.0</PopupButton>
          </FormRow>
          <FormRow $mt={14}>
            <FormLabel>Organization</FormLabel>
            <TextField />
          </FormRow>
          <FormRow $mt={14}>
            <FormLabel>Class Prefix</FormLabel>
            <TextField />
          </FormRow>
          <FormRow $mt={12}>
            <FormLabel>Encoding</FormLabel>
            <Check />
            <CheckText>Minimize Project References</CheckText>
          </FormRow>
          <InspectorRule $mt={26} />

          <InspectorTitle $h={48}>Text Settings</InspectorTitle>
          <FormRow $mt={13}>
            <FormLabel>Indent Using</FormLabel>
            <PopupButton>Spaces</PopupButton>
          </FormRow>
          <FormRow $mt={14}>
            <FormLabel>Widths</FormLabel>
            <NumberField $w={132}>2</NumberField>
            <StepBox $mr={18}><UpDown height={24} width={12} /></StepBox>
            <NumberField $w={134}>2</NumberField>
            <StepBox><UpDown height={24} width={12} /></StepBox>
          </FormRow>
          <FormRow $h={26}>
            <FormLabel />
            <Caption $w={132} $mr={44}>Tab</Caption>
            <Caption $w={134} $mr={0}>Indent</Caption>
          </FormRow>
          <FormRow $mt={12}>
            <FormLabel />
            <Check $on>
              <svg width="16" height="15" viewBox="0 0 16 15">
                <path d="M2 8L6.5 13L14 2" fill="none" stroke="#fff" strokeWidth="2.8" />
              </svg>
            </Check>
            <CheckText>Wrap lines</CheckText>
          </FormRow>
          <InspectorRule $mt={25} />
        </Inspector>
      </Window>
    </Page>
  )
}
